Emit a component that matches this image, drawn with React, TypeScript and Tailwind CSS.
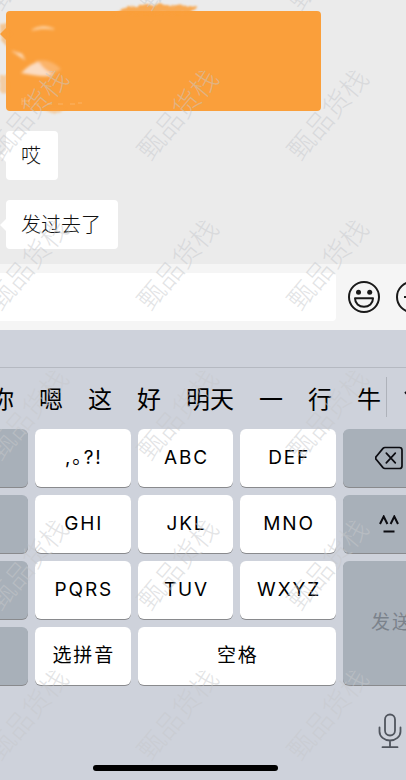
import { ReactNode } from 'react';
import clsx from 'clsx';

const messages = ['哎', '发过去了'];
const candidates = ['你', '嗯', '这', '好', '明天', '一', '行', '牛'];

const Watermark = () => (
    <div aria-hidden="true" className="pointer-events-none absolute inset-0 overflow-hidden">
        <div className="-mt-[111px] -ml-[47px] grid w-[750px] grid-cols-[repeat(5,150px)] auto-rows-[150px]">
            {Array.from({ length: 30 }, (_, i) => (
                <span key={i} className="flex items-center justify-center">
                    <span className="-rotate-50 whitespace-nowrap text-[27px] leading-none font-light text-[#c6c8cb]/50">甄品货栈</span>
                </span>
            ))}
        </div>
    </div>
);

const Tail = ({ className }: { className?: string }) => (
    <span className={clsx('absolute -left-1 size-[10px] rotate-45', className)} />
);

// brush strokes that cover the first message
const Scribble = () => (
    <svg className="absolute -top-[11px] -left-[6px] h-[125px] w-[326px]" viewBox="0 0 326 125" fill="none">
        <defs>
            <filter id="soft" x="-20%" y="-50%" width="140%" height="200%">
                <feGaussianBlur stdDeviation="1.8" />
            </filter>
            <filter id="rough" x="-20%" y="-50%" width="140%" height="200%">
                <feTurbulence type="fractalNoise" baseFrequency="0.12" numOctaves="2" seed="4" />
                <feDisplacementMap in="SourceGraphic" scale="5" />
                <feGaussianBlur stdDeviation="1.2" />
            </filter>
        </defs>
        <g filter="url(#rough)" fill="#fa9f3b">
            <path d="M112 14 C122 6 138 6 150 5 C166 4 185 7 197 5 L190 13 Z" opacity="0.85" />
            <path d="M0 24 L8 23 L8 48 L1 40 Z" opacity="0.5" />
            <path d="M0 75 L8 74 L8 94 L0 92 Z" opacity="0.4" />
            <path d="M42 108 L66 108 L56 115 Z" opacity="0.4" />
        </g>
        <g filter="url(#soft)">
            <path d="M32 30 Q42 24 54 29 Q42 27 32 30Z" fill="#ffe3c4" stroke="#fdd3a4" strokeWidth="1" />
            <path d="M12 51 L22 54 L25 60 Z" fill="#fde0c0" stroke="#fcc58c" strokeWidth="1" />
            <path d="M35 61 Q50 58 61 69 Q52 76 42 74Z" fill="#fbb975" opacity="0.8" />
            <path d="M21 73 Q32 62 39 62 Q44 70 54 75 Q44 78 21 73Z" fill="#fbdcc2" />
        </g>
        <path d="M22 98v7m3-8v8m-3-4h7m0-2v6m5-1h5m8 0h5m6 0h5m7 0h5m3-1h4" stroke="#fbd3a6" strokeWidth="1" opacity="0.4" />
    </svg>
);

const SmileIcon = () => (
    <svg className="size-8" viewBox="0 0 32 32" fill="none" stroke="#191919" strokeWidth="2">
        <circle cx="16" cy="16" r="15" />
        <circle cx="10.5" cy="11.3" r="2.5" fill="#191919" stroke="none" />
        <circle cx="21.7" cy="11.3" r="2.5" fill="#191919" stroke="none" />
        <path d="M7 17.300h18c0 5.200-4 8.500-9 8.500s-9-3.300-9-8.500z" strokeLinejoin="round" />
    </svg>
);

const PlusIcon = () => (
    <svg className="size-8" viewBox="0 0 32 32" fill="none" stroke="#191919" strokeWidth="2">
        <circle cx="16" cy="16" r="15" />
        <path d="M8 16h16M16 8v16" />
    </svg>
);

const BackspaceIcon = () => (
    <svg className="h-6 w-7 shrink-0" viewBox="0 0 28 24" fill="none" stroke="#0b0b10" strokeWidth="1.700" strokeLinecap="round" strokeLinejoin="round">
        <path d="M10 1.500h14.500a2.500 2.500 0 0 1 2.500 2.500v16a2.500 2.500 0 0 1-2.500 2.500H10a3 3 0 0 1-2-.9L1.300 13.500a2 2 0 0 1 0-3L8 2.400a3 3 0 0 1 2-.9z" />
        <path d="M11.300 7.200l9 9.600M20.300 7.200l-9 9.600" />
    </svg>
);

const FaceIcon = () => (
    <svg className="h-[18px] w-5 shrink-0" viewBox="0 0 20 18" fill="none" stroke="#0b0b10" strokeWidth="2">
        <path d="M1 9l3.700-7.500L8.400 9M11.600 9l3.700-7.500L19 9M4.500 16.500h11" />
    </svg>
);

const MicIcon = () => (
    <svg className="h-9 w-6" viewBox="0 0 24 36" fill="none" stroke="#50555e" strokeWidth="1.800" strokeLinecap="round">
        <rect x="7" y="1.500" width="10" height="21" rx="5" />
        <path d="M1.500 14.500v4a10.500 9 0 0 0 21 0v-4M12 27.500v6.500M4.500 34.200h15" />
    </svg>
);

const Key = ({ children, label, className }: { children?: ReactNode; label?: string; className?: string }) => (
    <button
        type="button"
        aria-label={label}
        className={clsx('flex items-center rounded-md text-[19px] tracking-widest shadow-[0_1px_0_#898a8d]', className)}
    >
        {children}
    </button>
);

const white = 'justify-center bg-white pt-px pl-[2px] text-black';
const side = 'bg-[#a8b0b9] rounded-l-none';
const right = 'bg-[#a8b0b9] rounded-r-none';

const App = () => {
    return (
        <div className="relative flex min-h-screen flex-col overflow-hidden bg-[#ebebeb] font-[Inter,'Noto_Sans_CJK_SC',sans-serif]">
            <main className="flex flex-1 flex-col items-start gap-5 px-[6px] pt-[11px] pb-[15px]">
                <div className="relative h-[100px] w-4/5 rounded-[4px] bg-[#fa9f3b]">
                    <Tail className="top-[18px] bg-[#fa9f3b]" />
                    <Scribble />
                </div>
                {messages.map((text) => (
                    <p key={text} className="relative rounded-[4px] bg-white pt-[11px] pr-[17px] pb-[9px] pl-[15px] text-xl leading-[29px] font-light text-[#111]">
                        <Tail className="top-5 bg-white" />
                        {text}
                    </p>
                ))}
            </main>

            <div className="flex h-[66px] items-center bg-[#f5f5f5]">
                <input type="text" aria-label="消息" className="mr-3 h-12 min-w-0 flex-1 rounded-r-[4px] bg-white px-3 text-xl outline-none" />
                <button type="button" aria-label="表情" className="mr-4 shrink-0">
                    <SmileIcon />
                </button>
                <button type="button" aria-label="更多" className="-mr-[22px] shrink-0">
                    <PlusIcon />
                </button>
            </div>

            <section className="bg-[#ced2db] pb-[10px]">
                <div className="h-[38px] border-b border-[#b5b9c1]" />
                <div className="flex h-[61px] items-center overflow-hidden">
                    <div className="-ml-[10px] flex flex-1 gap-[25px] pt-[3px] text-2xl whitespace-nowrap text-black">
                        {candidates.map((word) => (
                            <button type="button" key={word}>{word}</button>
                        ))}
                    </div>
                    <button type="button" aria-label="展开" className="-mr-[18px] mb-1 flex h-10 shrink-0 items-center border-l border-[#aeb2ba] pl-[17px]">
                        <svg className="h-3 w-5" viewBox="0 0 20 12" fill="none" stroke="#0b0b10" strokeWidth="2">
                            <path d="M1 1l9 9 9-9" />
                        </svg>
                    </button>
                </div>

                <div className="grid auto-rows-[58px] grid-cols-[28px_1fr_1fr_1fr_63px] gap-x-[7px] gap-y-2">
                    <Key label="123" className={side} />
                    <Key className={clsx(white, "[font-feature-settings:'halt']")}>,。?!</Key>
                    <Key className={white}>ABC</Key>
                    <Key className={white}>DEF</Key>
                    <Key label="删除" className={clsx(right, 'pl-8')}>
                        <BackspaceIcon />
                    </Key>

                    <Key label="#@¥" className={side} />
                    <Key className={white}>GHI</Key>
                    <Key className={white}>JKL</Key>
                    <Key className={white}>MNO</Key>
                    <Key label="颜文字" className={clsx(right, 'pl-9')}>
                        <FaceIcon />
                    </Key>

                    <Key label="ABC" className={side} />
                    <Key className={white}>PQRS</Key>
                    <Key className={white}>TUV</Key>
                    <Key className={white}>WXYZ</Key>
                    <Key className={clsx(right, 'row-span-2 overflow-hidden pt-px pl-7 whitespace-nowrap text-[#7b828b]')}>发送</Key>

                    <Key label="表情键盘" className={side} />
                    <Key className={white}>选拼音</Key>
                    <Key className={clsx(white, 'col-span-2')}>空格</Key>
                </div>

                <div className="flex justify-end pt-7 pr-1">
                    <button type="button" aria-label="语音输入">
                        <MicIcon />
                    </button>
                </div>
                <div className="mt-4 flex justify-center pr-9">
                    <div className="h-[6px] w-1/2 rounded-full bg-black" />
                </div>
            </section>
            <Watermark />
        </div>
    );
};

export default App;
